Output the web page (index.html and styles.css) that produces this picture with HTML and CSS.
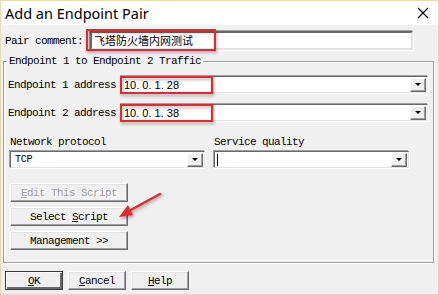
FILE: index.html
```html
<!DOCTYPE html>
<html lang="en">
<head>
	<meta charset="UTF-8">
	<title>Add an Endpoint Pair</title>
	<link rel="stylesheet" href="styles.css">
</head>
<body>
	<div class="dialog">
		<div class="titlebar">
			<span class="title">Add an Endpoint Pair</span>
			<svg class="close" width="12" height="12" viewBox="0 0 12 12"><path d="M1 1L11 11M11 1L1 11" stroke="#000" stroke-width="1.1"/></svg>
		</div>
		<div class="body">
			<div class="pair-row">
				<label>Pair comment:</label>
				<div class="field cjk">飞塔防火墙内网测试</div>
			</div>

			<fieldset class="group">
				<legend>Endpoint 1 to Endpoint 2 Traffic</legend>
				<div class="ep-row">
					<label>Endpoint 1 address</label>
					<div class="combo"><span class="ip">10. 0. 1. 28</span><span class="drop"></span></div>
				</div>
				<div class="ep-row second">
					<label>Endpoint 2 address</label>
					<div class="combo"><span class="ip">10. 0. 1. 38</span><span class="drop"></span></div>
				</div>

				<div class="cols">
					<div class="col">
						<label>Network protocol</label>
						<div class="combo"><span class="val">TCP</span><span class="drop"></span></div>
					</div>
					<div class="col">
						<label>Service quality</label>
						<div class="combo"><span class="caret"></span><span class="drop"></span></div>
					</div>
				</div>

				<div class="script-btns">
					<button class="btn disabled"><u>E</u>dit This Script</button>
					<button class="btn">Select <u>S</u>cript</button>
					<button class="btn">Management &gt;&gt;</button>
				</div>
			</fieldset>

			<div class="footer">
				<button class="btn small default"><u>O</u>K</button>
				<button class="btn small"><u>C</u>ancel</button>
				<button class="btn small"><u>H</u>elp</button>
			</div>
		</div>

		<!-- 标注层 -->
		<svg class="marks" width="439" height="295" viewBox="0 0 439 295">
			<rect x="87" y="30" width="128" height="20" fill="none" stroke="#e8262b" stroke-width="2"/>
			<rect x="121" y="77" width="91" height="16" fill="none" stroke="#e8262b" stroke-width="2"/>
			<rect x="121" y="105" width="91" height="16" fill="none" stroke="#e8262b" stroke-width="2"/>
			<path d="M160 194L129 211" stroke="#e8262b" stroke-width="2.5" stroke-linecap="round"/>
			<path d="M119 217L133 215L128 205Z" fill="#e8262b"/>
		</svg>
	</div>
</body>
</html>
```

FILE: styles.css
```css
*{margin: 0;padding: 0;box-sizing: border-box;}
html,body{width: 439px;height: 295px;overflow: hidden;}
body{
	font-family: "Liberation Mono", monospace;
	font-size: 11px;
	letter-spacing: -0.6px;
	color: #000;
	background: #f0f0f0;
}
.dialog{
	position: relative;
	width: 439px;
	height: 295px;
	border: 1px solid #e4dbb0;
	background: #f0f0f0;
}
.titlebar{
	display: flex;
	align-items: center;
	justify-content: space-between;
	height: 24px;
	padding: 0 9px 0 4px;
	background: #fff;
}
.title{
	font-family: "Noto Sans", sans-serif;
	font-size: 14.5px;
	letter-spacing: 0;
	padding-bottom: 1px;
}
.body{
	padding: 0 0 0 2px;
}
label{line-height: 12px;white-space: nowrap;}

/* 输入框 */
.pair-row{
	display: flex;
	align-items: center;
	margin-top: 6px;
	padding-left: 2px;
}
.pair-row label{width: 85px;}
.field{
	width: 323px;
	height: 19px;
	padding-left: 2px;
	background: #fff;
	border: 2px solid;
	border-color: #696969 #e3e3e3 #e3e3e3 #696969;
	box-shadow: -1px -1px 0 #a0a0a0, 1px 1px 0 #fff;
	line-height: 15px;
}
.cjk{
	font-family: "Noto Sans CJK SC", sans-serif;
	font-size: 11px;
	letter-spacing: 0;
}

/* 分组框 */
.group{
	width: 431px;
	height: 208px;
	margin-top: 5px;
	border: 1px solid #a0a0a0;
	box-shadow: inset 1px 1px 0 #fff, 1px 1px 0 #fff;
	padding: 0 4px 0 0;
}
.group legend{
	margin-left: 3px;
	padding: 0 2px;
	line-height: 12px;
}
.ep-row{
	display: flex;
	align-items: center;
	margin-top: 9px;
	padding-left: 4px;
}
.ep-row.second{margin-top: 11px;}
.ep-row label{width: 113px;}
.ep-row .combo{width: 307px;}

.combo{
	display: flex;
	align-items: center;
	justify-content: space-between;
	height: 17px;
	background: #fff;
	border: 1px solid;
	border-color: #696969 #e3e3e3 #e3e3e3 #696969;
	box-shadow: -1px -1px 0 #a0a0a0, 1px 1px 0 #fff;
	padding: 1px;
}
.ip{
	font-family: "Liberation Sans", sans-serif;
	font-size: 11px;
	letter-spacing: 0;
	padding-left: 1px;
}
.val{padding-left: 3px;font-size: 10px;letter-spacing: -0.2px;}
.caret{width: 1px;height: 12px;margin-left: 1px;background: #000;}
.drop{
	position: relative;
	width: 16px;
	height: 14px;
	margin-left: auto;
	background: #f0f0f0;
	border: 1px solid;
	border-color: #fff #696969 #696969 #fff;
	box-shadow: inset -1px -1px 0 #a0a0a0;
}
.drop:after{
	content: "";
	position: absolute;
	left: 4px;
	top: 4px;
	border-left: 3px solid transparent;
	border-right: 3px solid transparent;
	border-top: 3px solid #000;
}

.cols{
	display: flex;
	gap: 9px;
	margin-top: 15px;
	padding-left: 6px;
}
.col{width: 195px;}
.col label{display: block;margin-bottom: 3px;}

/* 按钮 */
.script-btns{
	display: flex;
	flex-direction: column;
	gap: 5px;
	margin-top: 15px;
	padding-left: 6px;
}
.btn{
	width: 118px;
	height: 19px;
	font-family: "Liberation Mono", monospace;
	font-size: 11px;
	letter-spacing: -0.6px;
	color: #000;
	background: #f0f0f0;
	border: 1px solid;
	border-color: #fff #696969 #696969 #fff;
	box-shadow: inset -1px -1px 0 #a0a0a0, inset 1px 1px 0 #e3e3e3;
	outline: none;
}
.btn.disabled{color: #a0a0a0;text-shadow: 1px 1px 0 #fff;}
.footer{
	display: flex;
	gap: 5px;
	margin-top: 8px;
	padding-left: 2px;
}
.btn.small{width: 58px;}
.btn.default{
	border: 1px solid #3c3c3c;
	box-shadow: inset 1px 1px 0 #fff, inset -2px -2px 0 #696969;
}

.marks{
	position: absolute;
	left: -1px;
	top: -1px;
	filter: drop-shadow(1px 2px 1.5px rgba(0,0,0,0.3));
	pointer-events: none;
}
```
